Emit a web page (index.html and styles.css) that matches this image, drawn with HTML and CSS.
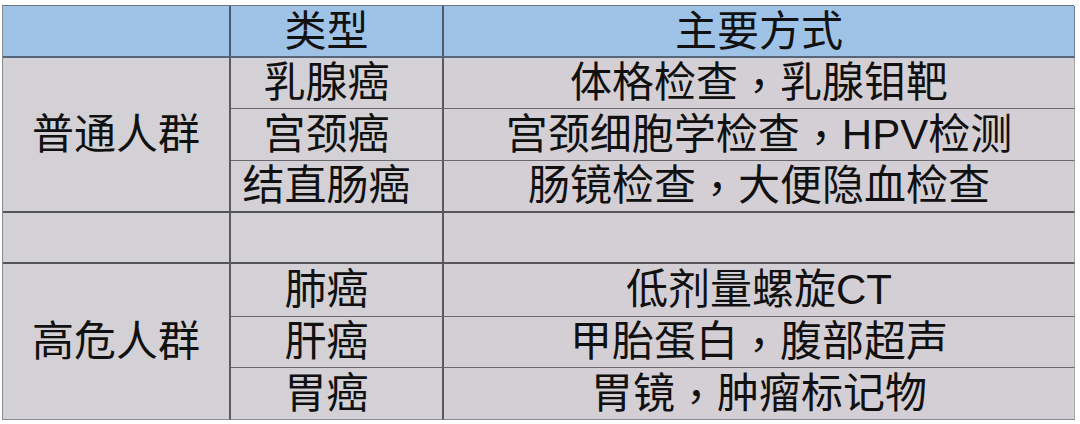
FILE: index.html
```html
<!DOCTYPE html>
<html lang="zh-CN">
<head>
<meta charset="utf-8">
<link rel="stylesheet" href="styles.css">
</head>
<body>
<div class="page">
  <div class="grid">
    <div class="cell head c1"></div>
    <div class="cell head c2">类型</div>
    <div class="cell head c3">主要方式</div>

    <div class="cell group g1">普通人群</div>
    <div class="cell c2">乳腺癌</div>
    <div class="cell c3">体格检查<span class="comma">，</span>乳腺钼靶</div>
    <div class="cell c2">宫颈癌</div>
    <div class="cell c3">宫颈细胞学检查<span class="comma">，</span>HPV检测</div>
    <div class="cell c2 endrow">结直肠癌</div>
    <div class="cell c3 endrow">肠镜检查<span class="comma">，</span>大便隐血检查</div>

    <div class="cell c1 endrow"></div>
    <div class="cell c2 endrow"></div>
    <div class="cell c3 endrow"></div>

    <div class="cell group g2">高危人群</div>
    <div class="cell c2">肺癌</div>
    <div class="cell c3">低剂量螺旋CT</div>
    <div class="cell c2">肝癌</div>
    <div class="cell c3">甲胎蛋白<span class="comma">，</span>腹部超声</div>
    <div class="cell c2 last">胃癌</div>
    <div class="cell c3 last">胃镜<span class="comma">，</span>肿瘤标记物</div>
  </div>
</div>
</body>
</html>
```

FILE: styles.css
```css
html, body {
  margin: 0;
  padding: 0;
  background: #ffffff;
}

.page {
  width: 1080px;
  height: 424px;
  padding: 5px 0 0 2px;
  box-sizing: border-box;
}

.grid {
  display: grid;
  width: 1072px;
  grid-template-columns: 228px 213px 631px;
  grid-template-rows: 52px 51px 52px 52px 51px 53px 51px 52px;
  border-left: 1px solid #8a8a8e;
  border-top: 1px solid #6b7480;
  box-sizing: border-box;
  font-family: "Liberation Sans", "Noto Sans CJK SC", sans-serif;
  font-size: 42px;
  color: #111111;
}

.cell {
  box-sizing: border-box;
  display: flex;
  align-items: center;
  justify-content: center;
  line-height: 1;
  background: #d3d1d5;
  border-bottom: 1px solid #6a6a6e;
  border-right: 2px solid #5a5a5e;
  white-space: nowrap;
}

.comma {
  font-family: "Noto Sans CJK TC", sans-serif;
}

.c3 {
  border-right: 1px solid #a8a4aa;
  background: #d4cfd4;
}

.c2 {
  padding-right: 20px;
}

.head {
  background: #9fc3e7;
  border-bottom: 2px solid #56667a;
  padding-top: 2px;
}

.head.c1, .head.c2 {
  border-right-color: #4e5a6a;
}

.head.c3 {
  border-right: 1px solid #6d7d92;
  background: #9fc3e7;
}

.endrow {
  border-bottom: 2px solid #555559;
}

.group {
  border-bottom: 2px solid #555559;
}

.g1 {
  grid-row: 2 / span 3;
}

.g2 {
  grid-row: 6 / span 3;
  border-bottom: 1px solid #8a8a8e;
}

.last {
  border-bottom: 1px solid #8a8a8e;
}
```
